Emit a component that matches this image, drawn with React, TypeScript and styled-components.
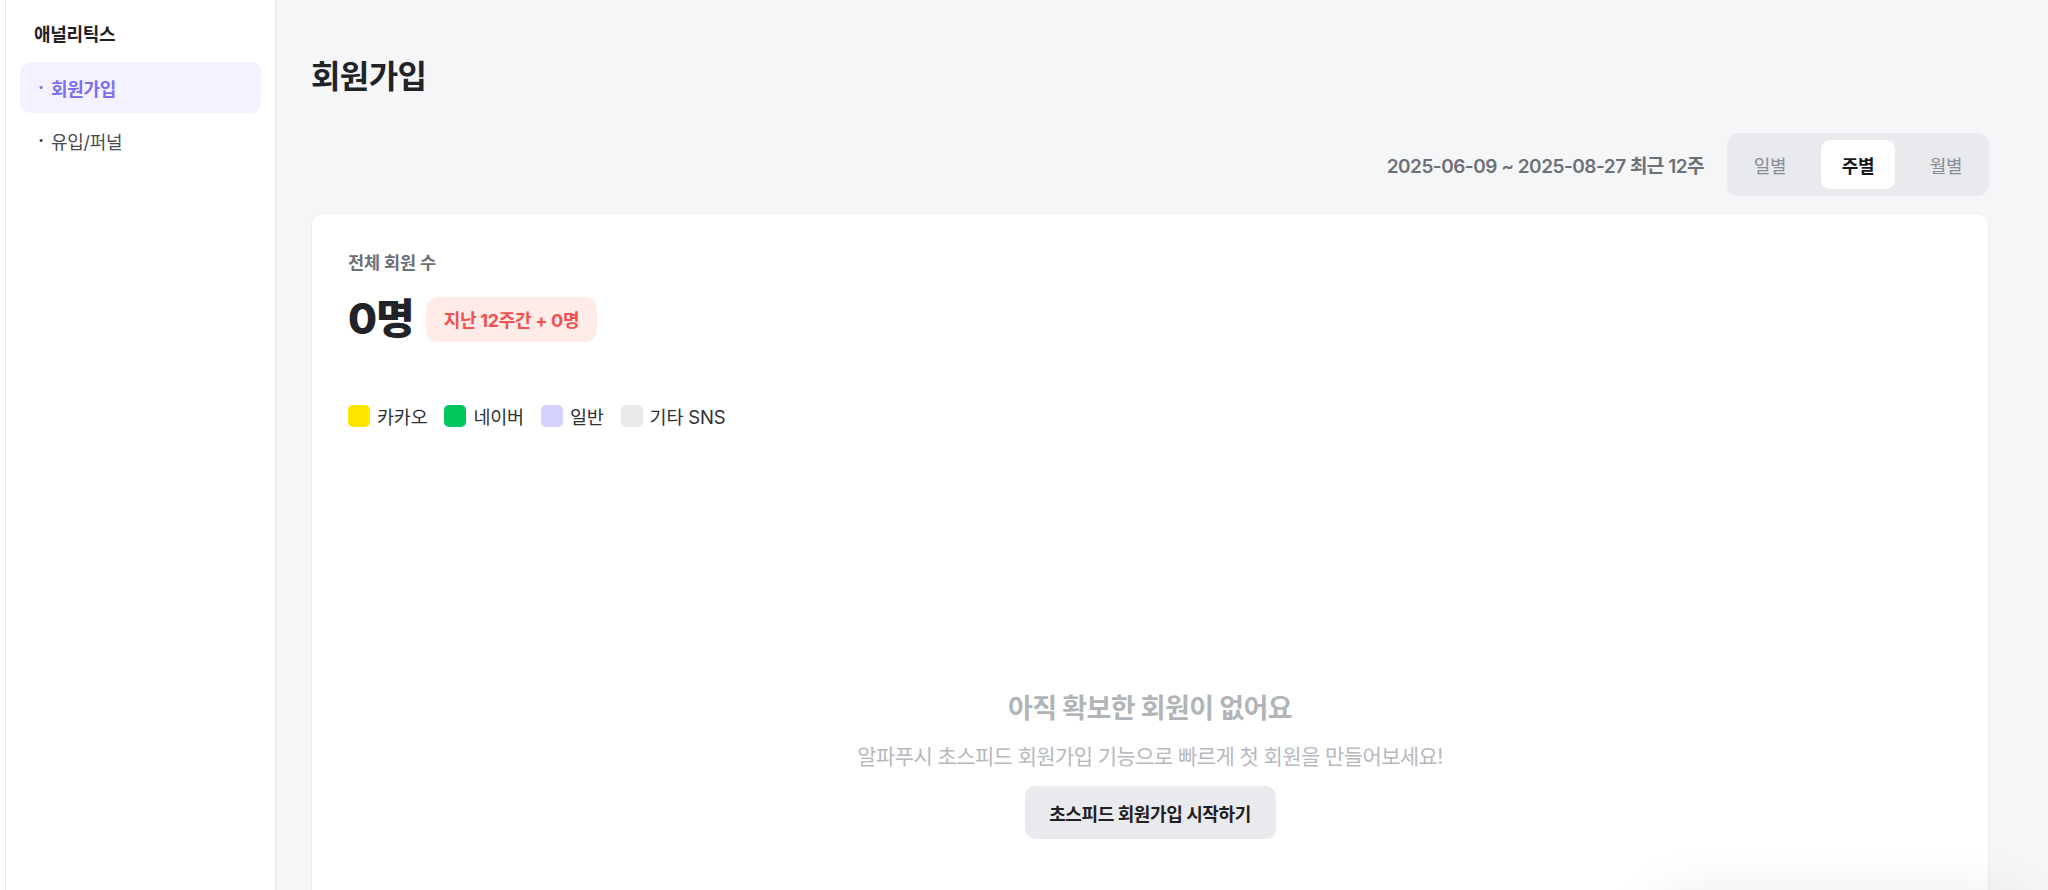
import React from "react";
import styled, { createGlobalStyle } from "styled-components";

const GlobalStyle = createGlobalStyle`
  * {
    box-sizing: border-box;
  }
  html,
  body {
    margin: 0;
    padding: 0;
    background: #ffffff;
    font-family: "Inter", "Noto Sans CJK KR", "Noto Sans", sans-serif;
    color: #222222;
  }
`;

const StyledLayout = styled("div")`
  display: flex;
  min-height: 100vh;
  padding-left: 5px;
`;

const StyledSidebar = styled("aside")`
  flex: 0 0 271px;
  background-color: #ffffff;
  border-left: 1px solid #e7e8ea;
  border-right: 1px solid #e7e8ea;
  padding: 22px 14px 0 14px;
`;

const StyledSidebarTitle = styled("div")`
  height: 26px;
  line-height: 26px;
  padding-left: 14px;
  font-size: 18px;
  font-weight: 700;
  letter-spacing: -0.3px;
  color: #1f2023;
`;

const StyledNav = styled("nav")`
  display: flex;
  flex-direction: column;
  gap: 2px;
  margin-top: 14px;
`;

const StyledNavItem = styled("div")<{ $active?: boolean }>`
  display: flex;
  align-items: center;
  gap: 9px;
  height: 51px;
  padding-left: 18px;
  border-radius: 10px;
  font-size: 18px;
  letter-spacing: -0.3px;
  font-weight: ${(p) => (p.$active ? 700 : 400)};
  color: ${(p) => (p.$active ? "#7d6ff2" : "#4a4c50")};
  background-color: ${(p) => (p.$active ? "#f4f2ff" : "transparent")};

  &::before {
    content: "·";
    font-weight: 700;
    width: 4px;
  }
`;

const StyledMain = styled("main")`
  flex: 1;
  background-color: #f5f6f8;
  padding: 56px 59px 0 35px;
`;

const StyledTitle = styled("h1")`
  margin: 0;
  height: 42px;
  line-height: 42px;
  font-size: 32px;
  font-weight: 700;
  letter-spacing: -0.6px;
  color: #222326;
`;

const StyledToolbar = styled("div")`
  display: flex;
  justify-content: flex-end;
  align-items: center;
  gap: 23px;
  margin-top: 35px;
`;

const StyledRange = styled("div")`
  font-size: 19px;
  font-weight: 600;
  letter-spacing: -0.5px;
  color: #6d7076;
`;

const StyledSegment = styled("div")`
  display: flex;
  gap: 14px;
  padding: 7px 6px;
  border-radius: 12px;
  background-color: #e9eaed;
`;

const StyledSegmentButton = styled("button")<{ $active?: boolean }>`
  width: 74px;
  height: 49px;
  border: none;
  border-radius: 9px;
  font-family: inherit;
  font-size: 18px;
  letter-spacing: -0.3px;
  font-weight: ${(p) => (p.$active ? 700 : 400)};
  color: ${(p) => (p.$active ? "#16171a" : "#888c93")};
  background-color: ${(p) => (p.$active ? "#ffffff" : "transparent")};
  cursor: pointer;
`;

const StyledCard = styled("section")`
  margin-top: 17px;
  background-color: #ffffff;
  border: 1px solid #eceef1;
  border-radius: 12px;
  padding: 37px 36px 0 36px;
  min-height: 760px;
`;

const StyledCardLabel = styled("div")`
  height: 24px;
  line-height: 24px;
  font-size: 17.5px;
  font-weight: 600;
  letter-spacing: -0.2px;
  color: #6d7076;
`;

const StyledCountRow = styled("div")`
  display: flex;
  align-items: center;
  gap: 12px;
  margin-top: 20px;
`;

const StyledCount = styled("div")`
  height: 48px;
  line-height: 48px;
  font-size: 42px;
  font-weight: 800;
  letter-spacing: -1px;
  color: #222326;
`;

const StyledBadge = styled("div")`
  display: flex;
  align-items: center;
  height: 45px;
  padding: 0 18px;
  border-radius: 12px;
  background-color: #ffebe8;
  color: #f0534f;
  font-size: 18px;
  font-weight: 700;
  letter-spacing: -0.3px;
`;

const StyledLegend = styled("div")`
  display: flex;
  align-items: center;
  gap: 17px;
  margin-top: 60px;
`;

const StyledLegendItem = styled("div")`
  display: flex;
  align-items: center;
  gap: 7px;
  font-size: 18.5px;
  letter-spacing: -0.2px;
  color: #2f3033;
`;

const StyledSwatch = styled("span")<{ $color: string }>`
  width: 22px;
  height: 22px;
  border-radius: 5px;
  background-color: ${(p) => p.$color};
`;

const StyledEmpty = styled("div")`
  display: flex;
  flex-direction: column;
  align-items: center;
  margin-top: 263px;
`;

const StyledEmptyTitle = styled("div")`
  height: 34px;
  line-height: 34px;
  font-size: 27px;
  font-weight: 700;
  letter-spacing: -0.6px;
  color: #b1b4b9;
`;

const StyledEmptyText = styled("div")`
  margin-top: 17px;
  height: 28px;
  line-height: 28px;
  font-size: 21px;
  letter-spacing: -0.6px;
  color: #b6b9be;
`;

const StyledEmptyButton = styled("button")`
  margin-top: 15px;
  width: 251px;
  height: 53px;
  border: none;
  border-radius: 10px;
  background-color: #e9eaed;
  font-family: inherit;
  font-size: 18px;
  font-weight: 700;
  letter-spacing: -0.4px;
  color: #1f2023;
  cursor: pointer;
`;

const StyledFloatingShadow = styled("div")`
  position: fixed;
  right: 30px;
  bottom: -130px;
  width: 360px;
  height: 120px;
  border-radius: 18px;
  background-color: #ffffff;
  box-shadow: 0 0 60px rgba(0, 0, 0, 0.1);
`;

const legend = [
  { label: "카카오", color: "#fee500" },
  { label: "네이버", color: "#03c75a" },
  { label: "일반", color: "#d5d2ff" },
  { label: "기타 SNS", color: "#e8e9eb" },
];

const periods = ["일별", "주별", "월별"];

const App: React.FC = () => {
  const activePeriod = "주별";
  return (
    <>
      <GlobalStyle />
      <StyledLayout>
        <StyledSidebar>
          <StyledSidebarTitle>애널리틱스</StyledSidebarTitle>
          <StyledNav>
            <StyledNavItem $active>회원가입</StyledNavItem>
            <StyledNavItem>유입/퍼널</StyledNavItem>
          </StyledNav>
        </StyledSidebar>
        <StyledMain>
          <StyledTitle>회원가입</StyledTitle>
          <StyledToolbar>
            <StyledRange>2025-06-09 ~ 2025-08-27 최근 12주</StyledRange>
            <StyledSegment>
              {periods.map((period) => (
                <StyledSegmentButton
                  key={period}
                  $active={period === activePeriod}
                >
                  {period}
                </StyledSegmentButton>
              ))}
            </StyledSegment>
          </StyledToolbar>
          <StyledCard>
            <StyledCardLabel>전체 회원 수</StyledCardLabel>
            <StyledCountRow>
              <StyledCount>0명</StyledCount>
              <StyledBadge>지난 12주간 + 0명</StyledBadge>
            </StyledCountRow>
            <StyledLegend>
              {legend.map((item) => (
                <StyledLegendItem key={item.label}>
                  <StyledSwatch $color={item.color} />
                  {item.label}
                </StyledLegendItem>
              ))}
            </StyledLegend>
            <StyledEmpty>
              <StyledEmptyTitle>아직 확보한 회원이 없어요</StyledEmptyTitle>
              <StyledEmptyText>
                알파푸시 초스피드 회원가입 기능으로 빠르게 첫 회원을 만들어보세요!
              </StyledEmptyText>
              <StyledEmptyButton>초스피드 회원가입 시작하기</StyledEmptyButton>
            </StyledEmpty>
          </StyledCard>
        </StyledMain>
      </StyledLayout>
      <StyledFloatingShadow />
    </>
  );
};

export default App;
